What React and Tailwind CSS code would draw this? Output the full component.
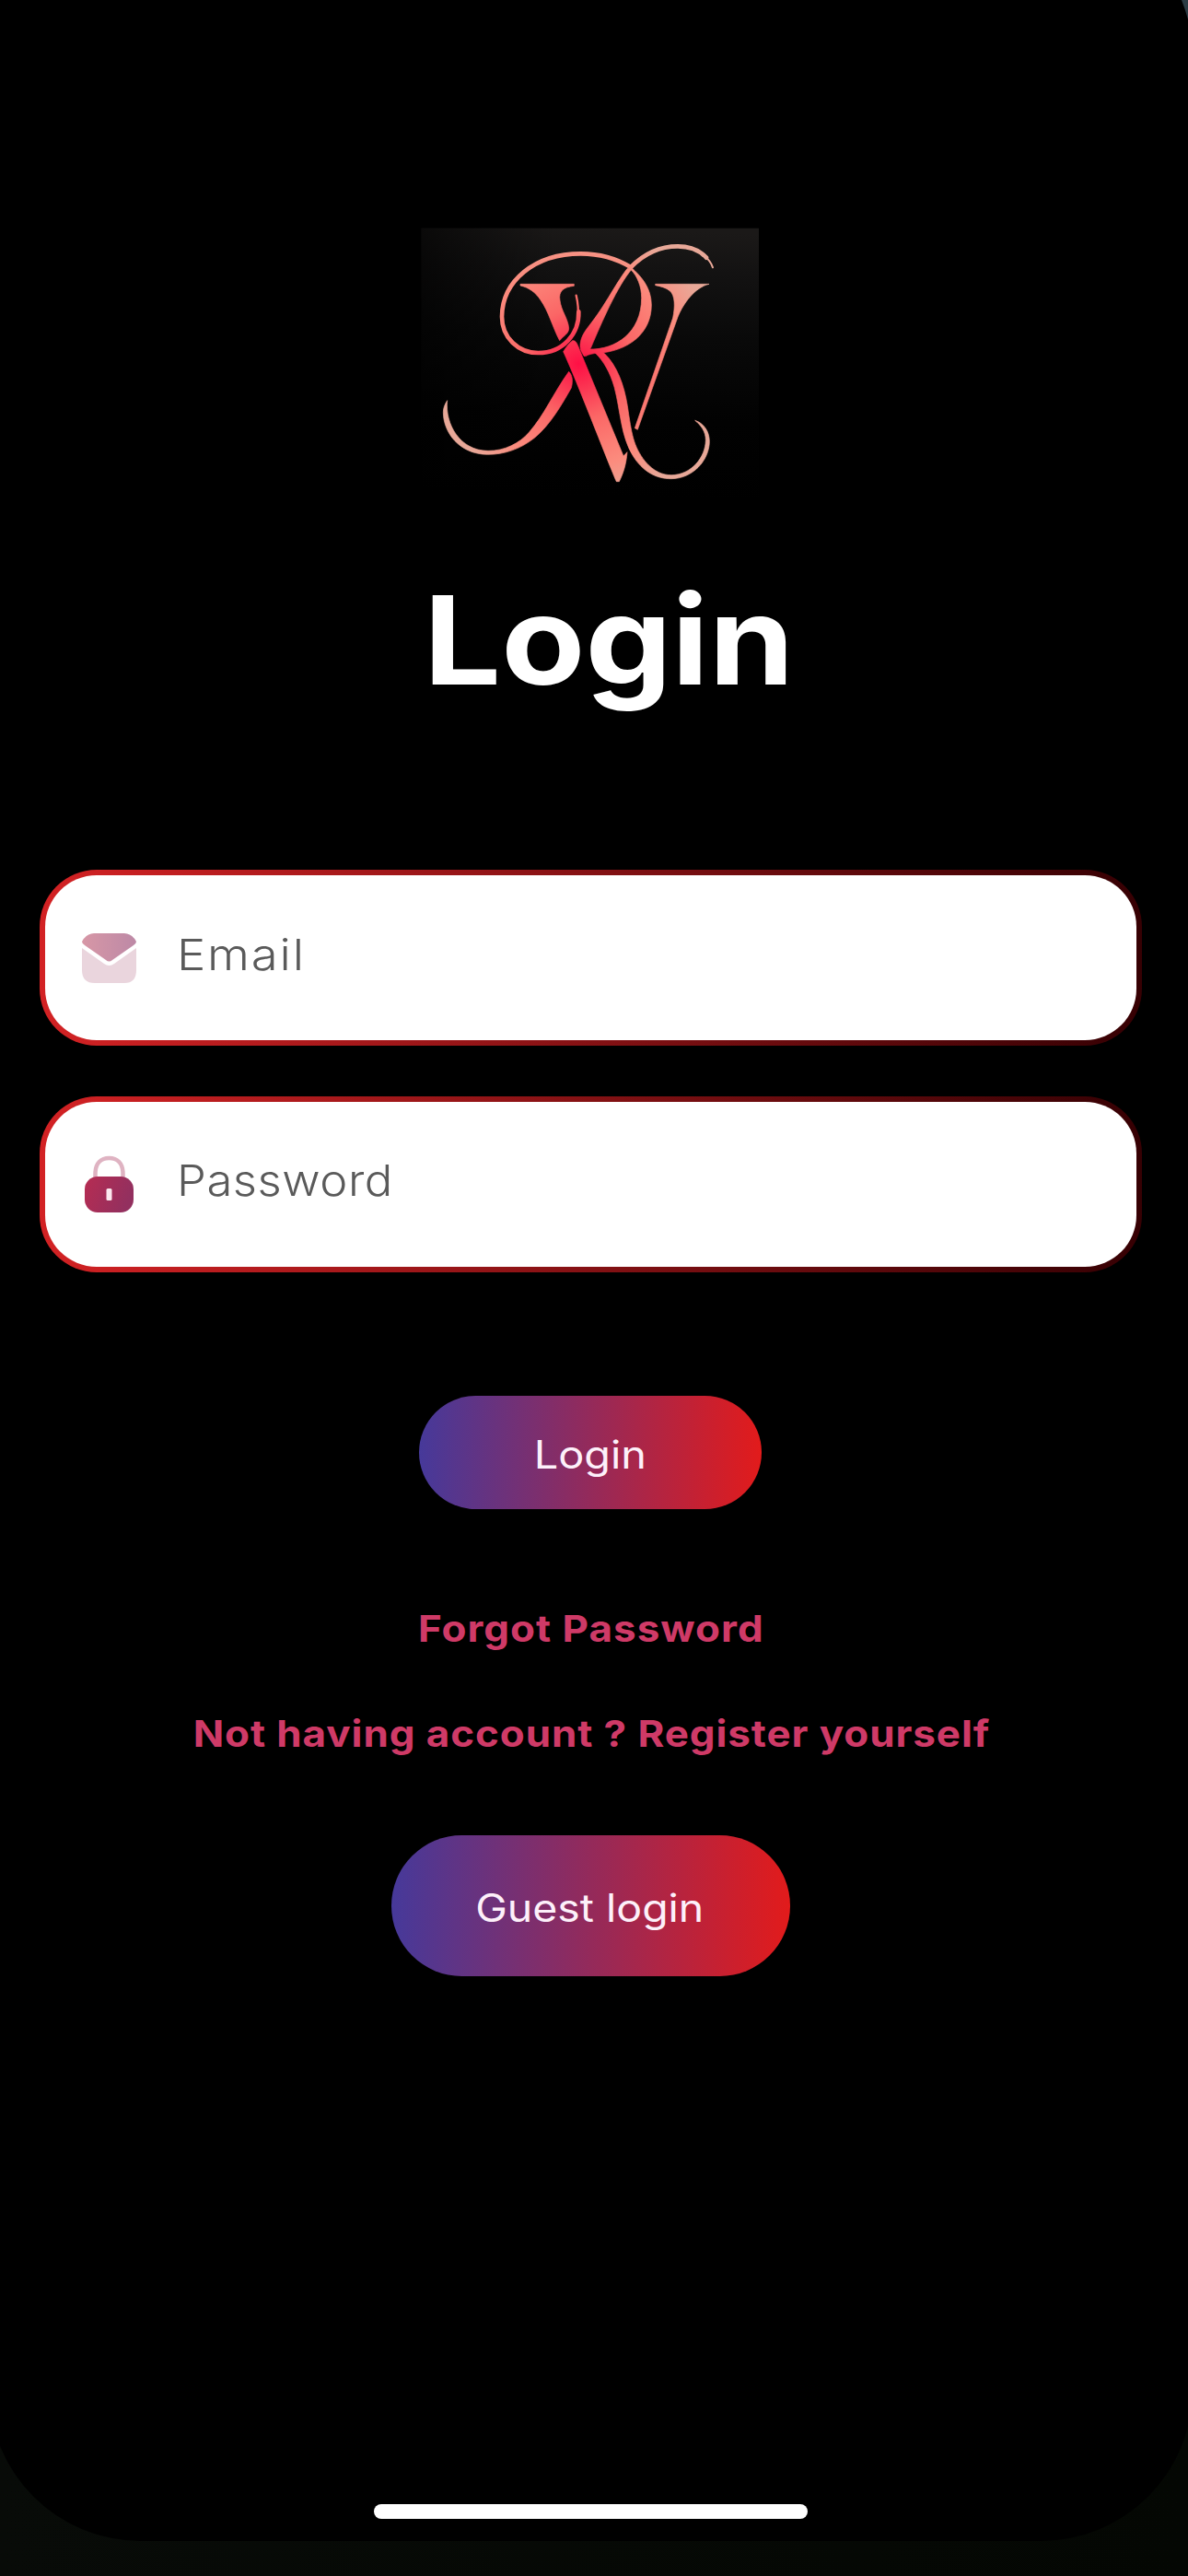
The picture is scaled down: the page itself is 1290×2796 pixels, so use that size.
const LINK = 'h-12 scale-x-[1.1] whitespace-nowrap text-[40px] leading-[48px] font-bold text-[#cf3a67]'
const PILL = 'flex items-center justify-center rounded-full bg-linear-to-r/srgb from-[#46399a] to-[#e21b1b] text-[42px] leading-none text-[#fdf0fa]'

function Logo() {
  return (
    <svg className="mr-0.5 h-[310px] w-[400px]" viewBox="0 0 1200 930" fill="none">
      <defs>
        <linearGradient id="backdrop" x1="0.55" y1="0" x2="0.5" y2="1">
          <stop offset="0" stopColor="#1b1918" />
          <stop offset="0.15" stopColor="#131212" />
          <stop offset="0.4" stopColor="#090909" />
          <stop offset="0.7" stopColor="#020202" />
          <stop offset="1" stopColor="#000" />
        </linearGradient>
        <linearGradient id="shade" x1="0" y1="0" x2="0.4" y2="0">
          <stop offset="0" stopColor="#000" stopOpacity="0.6" />
          <stop offset="1" stopColor="#000" stopOpacity="0" />
        </linearGradient>
        <radialGradient id="rose" gradientUnits="userSpaceOnUse" cx="565" cy="495" r="450">
          <stop offset="0" stopColor="#ff0f45" />
          <stop offset="0.15" stopColor="#fb2f50" />
          <stop offset="0.4" stopColor="#fb6766" />
          <stop offset="0.75" stopColor="#fb8c7e" />
          <stop offset="1" stopColor="#e8a898" />
        </radialGradient>
      </defs>
      <path d="M53 53H1152V930H53Z" fill="url(#backdrop)" />
      <path d="M53 53H1152V930H53Z" fill="url(#shade)" />
      <g fill="url(#rose)" stroke="url(#rose)" strokeWidth="2">
        {/* W: left serif, diagonal, right serif */}
        <path d="M375 235H550V241C515 245 499 258 504 288C508 322 530 346 533 378C534 396 515 404 503 419C480 376 468 325 441 287C425 262 402 246 375 240Z" />
        <path d="M545 419C553 418 558 424 562 434L711 795L723 782C720 822 710 852 697 878H688C668 835 558 547 515 455C524 440 533 428 545 419Z" />
        <path d="M815 235H990C943 246 906 298 888 342L757 709L748 704L872 345C879 310 880 272 862 257C850 247 832 242 815 239Z" />
        {/* R: stem, bowl, leg */}
        <path d="M724 184C692 222 650 308 598 372C577 398 565 425 572 450C576 460 580 466 584 471C592 463 599 454 605 442C642 356 690 243 740 184Z" />
        <path d="M735 180C768 208 802 247 802 303C802 398 724 453 630 460C612 460 598 464 587 470L598 447C684 450 770 394 770 280C770 243 756 208 735 188Z" />
        <path d="M618 458C628 453 638 453 648 460C690 500 713 563 724 632C738 724 742 761 782 813C810 846 840 857 867 857C932 856 978 800 979 743C979 716 964 695 944 679C972 688 991 714 991 748C990 811 935 869 866 869C814 869 772 842 743 796C702 731 702 649 681 570C668 524 647 486 618 458Z" />
        <path d="M533 520C545 532 547 551 541 573C510 628 472 694 421 736C374 773 323 790 268 790C177 789 124 719 124 652C124 639 129 626 137 614C129 690 178 778 270 778C324 778 372 754 404 717C452 663 484 588 533 520Z" />
      </g>
      <g stroke="url(#rose)" strokeLinecap="round">
        <path d="M735 180C682 148 630 136 572 136C420 136 316 226 315 341C315 410 369 459 433 459C515 459 567 396 565 325" strokeWidth="14" />
        <path d="M563 350C565 320 562 292 557 272" strokeWidth="7" />
        <path d="M735 180C780 134 832 112 888 112C929 112 961 127 981 149" strokeWidth="14" />
        <path d="M972 141C987 153 998 168 1002 181" strokeWidth="6" />
      </g>
    </svg>
  )
}

function MailIcon() {
  return (
    <svg className="size-[60px] shrink-0" viewBox="0 0 60 60">
      <defs>
        <linearGradient id="flap" x1="0" y1="0" x2="1" y2="0">
          <stop offset="0" stopColor="#d797a6" />
          <stop offset="1" stopColor="#bd89a6" />
        </linearGradient>
      </defs>
      <path d="M0 19L24 36Q29.500 40 35 36L59 19V43Q59 57 46 57H14Q0 57 0 43Z" fill="#ead5dd" />
      <path d="M13 3H46Q55 4 59 12Q59 14 56 16L33 32Q29.500 35 26 32L3 16Q0 14 0 12Q4 4 13 3Z" fill="url(#flap)" />
    </svg>
  )
}

function LockIcon() {
  return (
    <svg className="h-[64px] w-[60px] shrink-0" viewBox="0 0 60 64">
      <defs>
        <linearGradient id="lock" x1="0" y1="0" x2="1" y2="0.3">
          <stop offset="0" stopColor="#b62c52" />
          <stop offset="1" stopColor="#93305f" />
        </linearGradient>
      </defs>
      <path d="M14.500 24V20C14.500 8 21 3 29.500 3C38 3 44.500 8 44.500 20V24" fill="none" stroke="#dfb3c2" strokeWidth="4.500" />
      <rect x="3" y="23" width="53" height="39" rx="14" fill="url(#lock)" />
      <rect x="26.500" y="36" width="6" height="13" rx="1.500" fill="#fbe9ef" />
    </svg>
  )
}

function Field({ icon, children }) {
  return (
    <label className="block rounded-[62px] bg-linear-to-r/srgb from-[#d32224] to-[#360003] p-1.5">
      <span className="flex h-[179px] items-center rounded-[56px] bg-white pl-10">
        {icon}
        {children}
      </span>
    </label>
  )
}

export default function App() {
  return (
    <div className="relative h-[2796px] w-[1290px] overflow-hidden bg-linear-to-r from-[#080b08] to-[#040703] font-['Inter',sans-serif]">
      <main className="-ml-3 flex h-[2758px] w-[1307px] flex-col items-center rounded-b-[165px] bg-black pt-[230px] pr-[5px] pl-3">
        <div className="flex w-[1290px] flex-col items-center pr-2">
          <Logo />
          <h1 className="mt-[87px] ml-[41px] h-[134px] text-[134px] leading-none font-bold text-white">
            <span className="inline-block scale-x-[1.11]">Login</span>
          </h1>

          <div className="mt-[183px] flex w-[1197px] flex-col gap-[55px]">
            <Field icon={<MailIcon />}>
              <span className="ml-[43px] inline-block origin-left scale-x-[1.12] pb-[9px] text-[47px] leading-none font-light tracking-[1.600px] text-[#5a5a5a]">Email</span>
            </Field>
            <Field icon={<LockIcon />}>
              <span className="ml-[43px] inline-block origin-left scale-x-[1.08] pb-[11px] text-[47px] leading-none font-light tracking-[0.500px] text-[#5a5a5a]">Password</span>
            </Field>
          </div>

          <button className={`${PILL} mt-[134px] h-[123px] w-[372px] pt-[5px]`}>
            <span className="inline-block scale-x-[1.115]">Login</span>
          </button>
          <a className={`${LINK} mt-[106px] ml-0.5 tracking-[0.900px]`}>Forgot Password</a>
          <a className={`${LINK} mt-[66px] ml-0.5 tracking-[0.820px]`}>Not having account ? Register yourself</a>
          <button className={`${PILL} mt-[86px] h-[153px] w-[433px] pt-1`}>
            <span className="mr-0.5 inline-block scale-x-[1.105]">Guest login</span>
          </button>
        </div>
      </main>

      <svg className="absolute top-0 right-0 h-[22px] w-[8px]" viewBox="0 0 8 22">
        <path d="M1 0H8V21Q5 10 1 0Z" fill="#2c3c44" />
      </svg>
      <div className="absolute top-[2718px] left-[406px] h-4 w-[471px] rounded-full bg-white" />
    </div>
  )
}
